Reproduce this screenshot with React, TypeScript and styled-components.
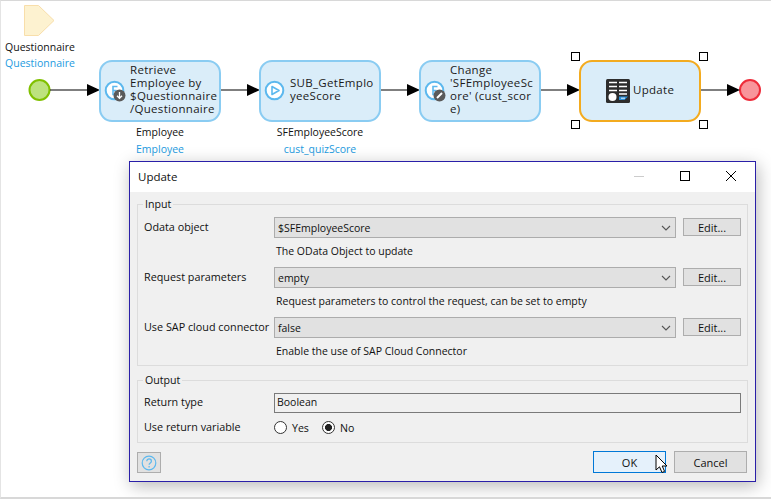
import React from "react";
import styled, { createGlobalStyle } from "styled-components";

const GlobalStyle = createGlobalStyle`
  html, body {
    margin: 0;
    padding: 0;
    background: #f0f0f0;
  }
  body {
    font-family: "Open Sans", "Liberation Sans", sans-serif;
    font-size: 11.5px;
    color: #111;
  }
`;

const Page = styled.div`
  position: relative;
  width: 771px;
  height: 499px;
  overflow: hidden;
  box-sizing: border-box;
  background: #fff;
  border-top: 1px solid #d8d8d8;
  border-left: 1px solid #e4e4e4;
  border-bottom: 2px solid #d8d8d8;
`;

const Canvas = styled.div`
  position: absolute;
  inset: 0;
`;

const Node = styled.div<{ $x: number; $sel?: boolean }>`
  position: absolute;
  left: ${(p) => p.$x}px;
  top: 59px;
  width: 122px;
  height: 62px;
  box-sizing: border-box;
  background: #daedf9;
  border: 2px solid ${(p) => (p.$sel ? "#f3ab1f" : "#8accf2")};
  border-radius: 13px;
  display: flex;
  align-items: center;
  padding-left: ${(p) => (p.$sel ? 25 : 3)}px;
  gap: ${(p) => (p.$sel ? 3 : 4)}px;
`;

const NodeText = styled.div`
  font-size: 11.5px;
  line-height: 13px;
  letter-spacing: 0.3px;
  margin-bottom: 4px;
  white-space: pre;
  color: #1a1a1a;
`;

const IconWrap = styled.div`
  position: relative;
  width: 22px;
  height: 22px;
  flex: none;
  margin-bottom: 1px;
`;

const Badge = styled.span`
  position: absolute;
  left: 9px;
  top: 9px;
  display: block;
  width: 13px;
  height: 13px;
`;

const Caption = styled.div<{ $x: number; $y: number; $w: number; $blue?: boolean }>`
  position: absolute;
  left: ${(p) => p.$x}px;
  top: ${(p) => p.$y}px;
  width: ${(p) => p.$w}px;
  text-align: center;
  font-size: 10.5px;
  line-height: 14px;
  color: ${(p) => (p.$blue ? "#1e9be0" : "#111")};
`;

const Wires = styled.svg`
  position: absolute;
  left: 0;
  top: 0;
`;

const Handle = styled.span<{ $x: number; $y: number }>`
  position: absolute;
  left: ${(p) => p.$x}px;
  top: ${(p) => p.$y}px;
  width: 9px;
  height: 9px;
  box-sizing: border-box;
  border: 1px solid #000;
  background: #fff;
`;

const Dialog = styled.div`
  position: absolute;
  left: 128px;
  top: 160px;
  width: 627px;
  height: 321px;
  box-sizing: border-box;
  background: #f0f0f0;
  border: 1px solid #2a1fa8;
  box-shadow: 2px 4px 16px rgba(0, 0, 0, 0.28);
  display: flex;
  flex-direction: column;
`;

const TitleBar = styled.div`
  height: 30px;
  flex: none;
  box-sizing: border-box;
  background: #fff;
  display: flex;
  align-items: center;
  padding: 0 1px 2px 8px;
  font-size: 11.5px;
`;

const TitleText = styled.span`
  flex: 1;
`;

const WinButton = styled.span`
  width: 46px;
  height: 28px;
  display: flex;
  align-items: center;
  justify-content: center;
`;

const Body = styled.div`
  flex: 1;
  display: flex;
  flex-direction: column;
  padding: 5px 0 0 7px;
`;

const Group = styled.fieldset<{ $h: number; $mt?: number }>`
  margin: ${(p) => p.$mt ?? 0}px 7px 0 0;
  padding: 0 6px 0 6px;
  height: ${(p) => p.$h}px;
  box-sizing: border-box;
  border: 1px solid #dcdcdc;
  min-width: 0;
`;

const Legend = styled.legend`
  padding: 0 2px;
  margin-left: -1px;
  font-size: 10.6px;
  line-height: 14px;
  color: #111;
`;

const Row = styled.div<{ $mt?: number }>`
  display: flex;
  align-items: center;
  height: 21px;
  margin-top: ${(p) => p.$mt ?? 0}px;
`;

const Label = styled.label`
  width: 130px;
  flex: none;
  margin-bottom: 2px;
  font-size: 10.8px;
  white-space: nowrap;
  color: #111;
`;

const Select = styled.div`
  width: 402px;
  height: 21px;
  flex: none;
  box-sizing: border-box;
  border: 1px solid #acacac;
  background: #e1e1e1;
  display: flex;
  align-items: center;
  justify-content: space-between;
  padding: 0 4px 0 3px;
  font-size: 10.5px;
  color: #111;
`;

const EditButton = styled.button`
  margin: 0 0 1px 7px;
  width: 58px;
  height: 18px;
  flex: none;
  box-sizing: border-box;
  border: 1px solid #adadad;
  background: #e1e1e1;
  padding: 0;
  font: inherit;
  font-size: 11px;
  color: #111;
`;

const Hint = styled.div`
  margin: 4px 0 0 132px;
  height: 18px;
  line-height: 18px;
  font-size: 10.5px;
  color: #111;
`;

const TextInput = styled.div`
  width: 468px;
  height: 20px;
  box-sizing: border-box;
  border: 1px solid #7a7a7a;
  padding: 0 2px;
  line-height: 17px;
  font-size: 10.5px;
  color: #111;
`;

const Radio = styled.span`
  display: inline-flex;
  align-items: center;
  gap: 5px;
  margin-right: 13px;
  font-size: 10.6px;
  color: #111;
`;

const RadioDot = styled.span<{ $on?: boolean }>`
  width: 13px;
  height: 13px;
  box-sizing: border-box;
  border-radius: 50%;
  border: 1px solid #333;
  background: ${(p) =>
    p.$on ? "radial-gradient(circle, #222 0 3.2px, #fff 3.8px)" : "#fff"};
`;

const Footer = styled.div`
  display: flex;
  align-items: flex-end;
  justify-content: space-between;
  margin-top: 8px;
  padding-right: 8px;
`;

const HelpButton = styled.button`
  width: 24px;
  height: 21px;
  padding: 0;
  box-sizing: border-box;
  border: 1px solid #adadad;
  background: #e1e1e1;
  display: flex;
  align-items: center;
  justify-content: center;
`;

const Actions = styled.div`
  display: flex;
  gap: 8px;
`;

const ActionButton = styled.button<{ $primary?: boolean }>`
  width: 73px;
  height: 22px;
  box-sizing: border-box;
  padding: 0;
  font: inherit;
  font-size: 11px;
  color: #111;
  border: 1px solid ${(p) => (p.$primary ? "#0078d7" : "#adadad")};
  background: ${(p) => (p.$primary ? "#e5f1fb" : "#e1e1e1")};
`;

const Cursor = styled.svg`
  position: absolute;
  left: 654px;
  top: 453px;
`;

const Entity = ({ badge }: { badge: "get" | "edit" }) => (
  <IconWrap>
    <svg width="22" height="22" viewBox="0 0 22 22">
      <circle cx="10.5" cy="10.5" r="8.8" fill="#fff" stroke="#5cb8ee" strokeWidth="2" />
      <path d="M13.5 6.5H9v8h4.5M9 10.5h3.5" fill="none" stroke="#5cb8ee" strokeWidth="1.6" />
    </svg>
    <Badge>
      <svg width="13" height="13" viewBox="0 0 13 13">
        <circle cx="6.5" cy="6.5" r="6" fill="#5a5a5a" />
        {badge === "get" ? (
          <path d="M6.5 3v6M4 6.8l2.5 2.5L9 6.8" fill="none" stroke="#fff" strokeWidth="1.3" />
        ) : (
          <path d="M4 9l5-5" fill="none" stroke="#fff" strokeWidth="2" />
        )}
      </svg>
    </Badge>
  </IconWrap>
);

const PlayIcon = () => (
  <IconWrap>
    <svg width="22" height="22" viewBox="0 0 22 22">
      <circle cx="10.5" cy="10.5" r="8.8" fill="#fff" stroke="#5cb8ee" strokeWidth="2" />
      <path d="M8 6.5l7 4-7 4z" fill="none" stroke="#5cb8ee" strokeWidth="1.6" strokeLinejoin="round" />
    </svg>
  </IconWrap>
);

const SapIcon = () => (
  <svg width="24" height="24" viewBox="0 0 24 24">
    <rect width="24" height="24" rx="1.5" fill="#2d2d2d" />
    <path d="M3 3.5h8M13 3.5h8M3 7.5h8M13 7.5h8M13 11.5h8M3 11.5h8M13 15h8" stroke="#fff" strokeWidth="1.6" />
    <circle cx="6.5" cy="18" r="4" fill="#fff" />
    <path d="M13 17.5h9l-3.5 3.5H13z" fill="#2a8fd8" />
    <path d="M15 19.2h4" stroke="#fff" strokeWidth="0.9" />
  </svg>
);

function Chevron() {
  return (
    <svg width="10" height="6" viewBox="0 0 10 6">
      <path d="M1 1l4 4 4-4" fill="none" stroke="#555" strokeWidth="1.1" />
    </svg>
  );
}

export default function App() {
  return (
    <Page>
      <GlobalStyle />
      <Canvas>
        <Wires width="771" height="160">
          <path d="M23.5 4.5H37.5L53 19.5 37.5 34.5H23.5z" fill="#fdf2d0" stroke="#f8deaa" />
          <circle cx="38.5" cy="89" r="10" fill="#bde27f" stroke="#80c000" strokeWidth="2" />
          <circle cx="749" cy="89" r="10" fill="#f8959b" stroke="#ee2c3a" strokeWidth="2" />
          <path d="M49 89h38M218 89h29M378 89h29M538 89h29M699 89h28" stroke="#000" strokeWidth="1.2" />
          <path d="M86 83l13 6-13 6zM246 83l13 6-13 6zM406 83l13 6-13 6zM566 83l13 6-13 6zM726 83l13 6-13 6z" fill="#000" />
        </Wires>
        <Caption $x={0} $y={39} $w={78}>Questionnaire</Caption>
        <Caption $x={0} $y={55} $w={78} $blue>Questionnaire</Caption>
        <Node $x={98}>
          <Entity badge="get" />
          <NodeText>{"Retrieve\nEmployee by\n$Questionnaire\n/Questionnaire"}</NodeText>
        </Node>
        <Caption $x={120} $y={124} $w={78}>Employee</Caption>
        <Caption $x={120} $y={141} $w={78} $blue>Employee</Caption>
        <Node $x={258}>
          <PlayIcon />
          <NodeText>{"SUB_GetEmplo\nyeeScore"}</NodeText>
        </Node>
        <Caption $x={260} $y={124} $w={118}>SFEmployeeScore</Caption>
        <Caption $x={260} $y={141} $w={118} $blue>cust_quizScore</Caption>
        <Node $x={418}>
          <Entity badge="edit" />
          <NodeText>{"Change\n'SFEmployeeSc\nore' (cust_scor\ne)"}</NodeText>
        </Node>
        <Node $x={578} $sel>
          <SapIcon />
          <NodeText>Update</NodeText>
        </Node>
        <Handle $x={570} $y={51} />
        <Handle $x={698} $y={51} />
        <Handle $x={570} $y={119} />
        <Handle $x={698} $y={119} />
      </Canvas>
      <Dialog>
        <TitleBar>
          <TitleText>Update</TitleText>
          <WinButton>
            <svg width="12" height="12" viewBox="0 0 12 12"><path d="M1 6.5h10" stroke="#ccc" /></svg>
          </WinButton>
          <WinButton>
            <svg width="12" height="12" viewBox="0 0 12 12"><rect x="1.5" y="1.5" width="9" height="9" fill="none" stroke="#000" /></svg>
          </WinButton>
          <WinButton>
            <svg width="12" height="12" viewBox="0 0 12 12"><path d="M1 1l10 10M11 1L1 11" stroke="#000" /></svg>
          </WinButton>
        </TitleBar>
        <Body>
          <Group $h={169}>
            <Legend>Input</Legend>
            <Row $mt={6}>
              <Label>Odata object</Label>
              <Select>$SFEmployeeScore<Chevron /></Select>
              <EditButton>Edit...</EditButton>
            </Row>
            <Hint>The OData Object to update</Hint>
            <Row $mt={7}>
              <Label>Request parameters</Label>
              <Select>empty<Chevron /></Select>
              <EditButton>Edit...</EditButton>
            </Row>
            <Hint>Request parameters to control the request, can be set to empty</Hint>
            <Row $mt={7}>
              <Label>Use SAP cloud connector</Label>
              <Select>false<Chevron /></Select>
              <EditButton>Edit...</EditButton>
            </Row>
            <Hint>Enable the use of SAP Cloud Connector</Hint>
          </Group>
          <Group $h={70} $mt={7}>
            <Legend>Output</Legend>
            <Row $mt={5}>
              <Label>Return type</Label>
              <TextInput>Boolean</TextInput>
            </Row>
            <Row $mt={4}>
              <Label>Use return variable</Label>
              <Radio><RadioDot />Yes</Radio>
              <Radio><RadioDot $on />No</Radio>
            </Row>
          </Group>
          <Footer>
            <HelpButton>
              <svg width="16" height="16" viewBox="0 0 16 16">
                <circle cx="8" cy="8" r="6.8" fill="none" stroke="#5cb8ee" strokeWidth="1.2" />
                <path d="M5.8 6.2c0-3 4.6-3 4.6 0 0 1.8-2.3 1.7-2.3 3.6M8.1 11v1.4" fill="none" stroke="#5cb8ee" strokeWidth="1.2" />
              </svg>
            </HelpButton>
            <Actions>
              <ActionButton $primary>OK</ActionButton>
              <ActionButton>Cancel</ActionButton>
            </Actions>
          </Footer>
        </Body>
      </Dialog>
      <Cursor width="13" height="20" viewBox="0 0 13 20">
        <path d="M1 1v15l3.5-3.2L7 18.5l2.6-1.1L7.2 12H12z" fill="#fff" stroke="#000" strokeWidth="1" />
      </Cursor>
    </Page>
  );
}
